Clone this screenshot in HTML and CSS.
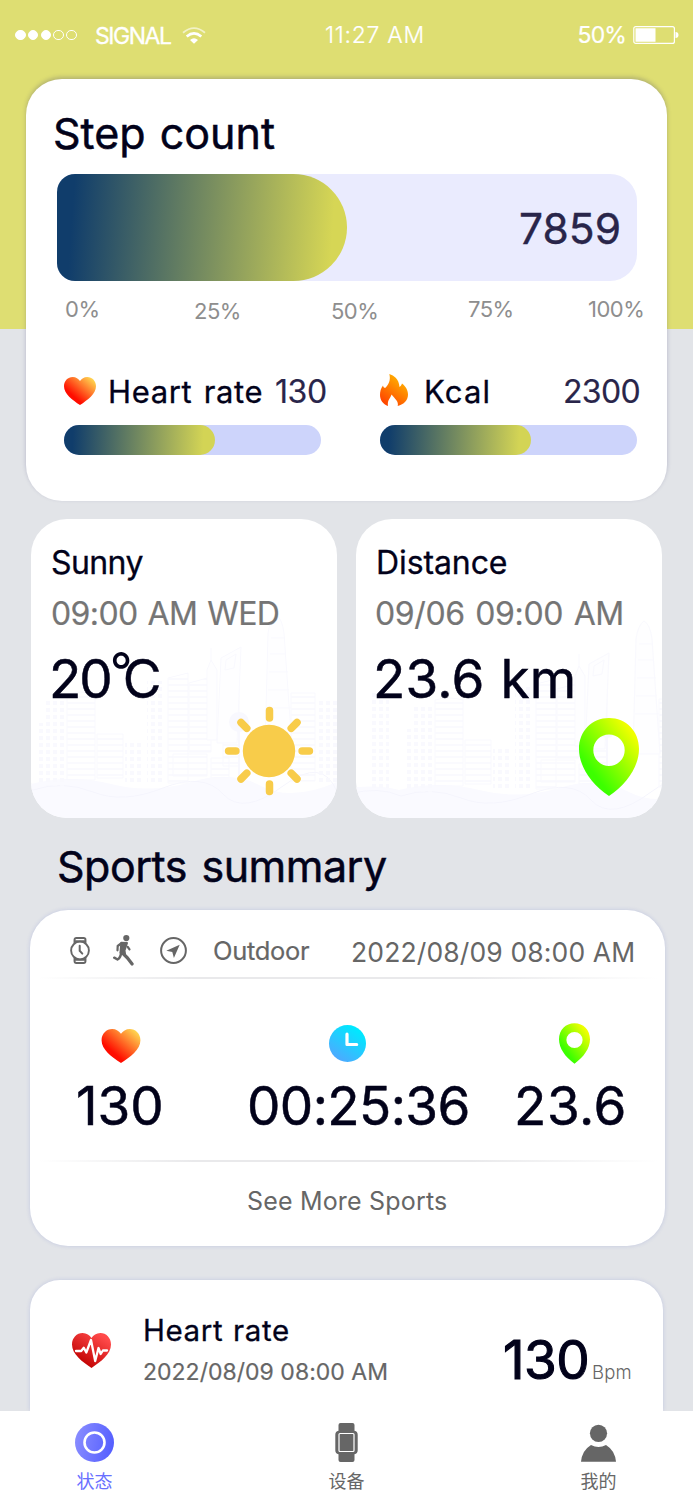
FILE: index.html
```
<!DOCTYPE html>
<html lang="en">
<head>
<meta charset="utf-8">
<title>Health status</title>
<link rel="stylesheet" href="styles.css">
</head>
<body>
<svg class="defs" aria-hidden="true">
  <defs>
    <linearGradient id="gHeart" x1=".2" y1=".8" x2=".9" y2=".1"><stop offset=".15" stop-color="#ff0d00"/><stop offset="1" stop-color="#ffd24f"/></linearGradient>
    <linearGradient id="gFlame" x1=".2" y1=".9" x2=".7" y2=".1"><stop offset="0" stop-color="#ff4800"/><stop offset="1" stop-color="#ffb000"/></linearGradient>
    <linearGradient id="gPin" x1=".2" y1=".8" x2=".85" y2=".15"><stop offset=".1" stop-color="#3cff00"/><stop offset="1" stop-color="#f0ff00"/></linearGradient>
    <linearGradient id="gClock" x1=".15" y1=".9" x2=".7" y2=".1"><stop offset="0" stop-color="#4fa8ff"/><stop offset="1" stop-color="#00e8ff"/></linearGradient>
    <linearGradient id="gPulse" x1=".2" y1=".9" x2=".8" y2=".1"><stop offset=".1" stop-color="#c40606"/><stop offset="1" stop-color="#ff4a4a"/></linearGradient>
    <linearGradient id="gNav" x1="0" y1=".4" x2="1" y2=".6"><stop offset="0" stop-color="#888cff"/><stop offset="1" stop-color="#545eff"/></linearGradient>
    <pattern id="floors" width="8" height="6" patternUnits="userSpaceOnUse"><path d="M0 1h8" stroke="#f8f8fe" stroke-width="1.4"/></pattern>
    <pattern id="panes" width="7" height="7" patternUnits="userSpaceOnUse"><path d="M1 1h4v4H1z" fill="#f9f9fe"/></pattern>
    <symbol id="heart" viewBox="0 0 32 28"><path d="M8.7 0C4 0 0 3.8 0 9.2 0 17 8.500 23 16 28c7.500-5 16-11 16-18.800C32 3.800 28 0 23.300 0 20 0 17.500 1.700 16 4 14.500 1.700 12 0 8.700 0z"/></symbol>
    <symbol id="pin" viewBox="0 0 60 78"><path fill-rule="evenodd" d="M30 0C13 0 0 13 0 31c0 17 12 35 30 47 18-12 30-30 30-47C60 13 47 0 30 0zm0 16.500a15.700 15.700 0 1 1 0 31.400 15.700 15.700 0 0 1 0-31.400z"/></symbol>
    <g id="skyline">
      <path d="M-50 194q30-4 50 2 40-10 80 0t80-2 70 4 76-4v46H-50z" fill="#fafaff"/>
      <path d="M-50 200q30-8 52 2 30-10 60 2t70-4 60 6 60-8 54 6" fill="none" stroke="#f5f5fd"/>
      <g stroke="#f9f9fe" fill="url(#floors)">
        <path d="M36 106q14-4 28 0v86H36zM137 90l20-5v110h-20zM158 95l22-6v75h-22zM192 74l16-8v112h-16zM66 146h26v44H66zM142 166h34v22h-34zM180 170h18v20h-18zM260 105h24v88h-24z"/>
      </g>
      <path d="M190 70l20-11-4 96h-20zM195 72l10-6-2 14-9 2zM180 74v-14m-4 22l4-10 6 10v70h-10zM234 160l3-115q2-14 8-18 6 3 8 18l8 115zM240 50h14M239 66h16M238 84h19M237 102h21M236 120h24" fill="#fefeff" stroke="#f9f9fe"/>
      <path d="M-30 98h20v98h-20zM14 113h20v85H14zM5 135h9v62H5zM116 93h17v103h-17zM286 110h20v84h-20zM94 155h18v40H94z" fill="url(#panes)"/>
      <circle cx="208" cy="134" r="10" fill="#f8f8fe"/><path d="M207 143h2v50h-2z" fill="#f8f8fe"/>
    </g>
  </defs>
</svg>

<main class="screen">
  <header class="status">
    <span class="dots"><i class="dot on"></i><i class="dot on"></i><i class="dot on"></i><i class="dot"></i><i class="dot"></i></span>
    <span class="carrier">SIGNAL</span>
    <svg class="wifi" viewBox="0 0 24 17"><path d="M1 5.700Q12-3.500 23 5.700" fill="none" stroke="#fff" stroke-width="1.800" opacity=".6"/><path d="M4.700 9.400q7.300-6.200 14.600 0" fill="none" stroke="#fff" stroke-width="2.600"/><path d="M8 13q4-3.400 8 0l-4 3.700z" fill="#fff"/></svg>
    <span class="clock">11:27 AM</span>
    <span class="battery-label">50%</span>
    <svg class="battery" viewBox="0 0 46 18"><rect x=".8" y=".6" width="40.600" height="16.800" rx="2" fill="none" stroke="#fff" stroke-width="1.200"/><path d="M2.500 2.300h20v13.400h-20zM42.500 6q3 0 3 3t-3 3z" fill="#fff"/></svg>
  </header>

  <section class="card steps">
    <h1 class="steps-title">Step count</h1>
    <div class="steps-track"><div class="steps-fill"></div><span class="steps-value">7859</span></div>
    <div class="scale"><span>0%</span><span class="low">25%</span><span class="low">50%</span><span>75%</span><span>100%</span></div>
    <div class="metrics">
      <div class="metric">
        <div class="metric-head"><svg class="metric-heart" fill="url(#gHeart)"><use href="#heart"/></svg><span class="metric-name">Heart rate</span><span class="metric-value">130</span></div>
        <div class="track"><div class="fill"></div></div>
      </div>
      <div class="metric">
        <div class="metric-head"><svg class="flame" viewBox="0 0 28 32"><path fill="url(#gFlame)" d="M9.300 0C14 1.500 19 5 19.500 13c1.300-1 2-2 2.500-3.500 3.500 2.500 6 6.500 6 11C28 26 24 30.500 17.700 32 19 27.500 15 25 11.500 20.500 11 23.500 7 26 8 32 3 30 0 26 0 21c0-3.500.8-6.500 3-9.500.3 1.500 1 2.500 2.500 2.300C10 9 10.500 4.500 9.300 0z"/></svg><span class="metric-name n-kcal">Kcal</span><span class="metric-value v-kcal">2300</span></div>
        <div class="track"><div class="fill"></div></div>
      </div>
    </div>
  </section>

  <div class="tiles">
    <section class="tile">
      <svg class="skyline"><use href="#skyline"/></svg>
      <h2 class="tile-title t-sunny">Sunny</h2>
      <p class="tile-date">09:00 AM WED</p>
      <p class="tile-value v-temp">20<span class="degree">°</span><span>C</span></p>
      <svg class="sun" viewBox="-45 -45 90 90"><circle r="26.200" fill="#f8cc4a"/><path d="M.5-40.400v7.300M.5 40.400v-7.300M-40.400 0h7.300M40.400 0h-7.300M-28-28.500l5.800 5.800M28-28.500l-5.800 5.800M-28 28l5.800-5.800M28 28l-5.800-5.800" stroke="#f8cc4a" stroke-width="7.500" stroke-linecap="round"/></svg>
    </section>
    <section class="tile">
      <svg class="skyline shifted"><use href="#skyline"/></svg>
      <h2 class="tile-title">Distance</h2>
      <p class="tile-date d-distance">09/06 09:00 AM</p>
      <p class="tile-value v-distance">23.6 km</p>
      <svg class="pin-large" fill="url(#gPin)"><use href="#pin"/></svg>
    </section>
  </div>

  <h2 class="section-title">Sports summary</h2>

  <section class="card sports">
    <div class="sports-head">
      <svg class="ico-watch" viewBox="0 0 20 27" fill="none" stroke="#666" stroke-width="1.900"><circle cx="10" cy="13.500" r="8.900"/><path d="M4.500 6.300V2.900Q4.500 1 6.400 1h7.200q1.900 0 1.900 1.900v3.400M4.500 20.700v3.400Q4.500 26 6.400 26h7.200q1.900 0 1.900-1.900v-3.400M5 4.300h10M5 22.700h10"/><path d="M9.700 8.800v5l2.600 2.800" stroke-linecap="round" stroke-width="2"/></svg>
      <svg class="ico-run" viewBox="0 0 21 31" fill="none" stroke="#666" stroke-linecap="round" stroke-linejoin="round"><circle cx="13.300" cy="3.100" r="3.100" fill="#666" stroke="none"/><path d="M8.300 7.800l5.700.2-2.500 7.500.5 3.500-4.500-1.500z" fill="#666" stroke-width="2"/><path d="M8 8.500L4.700 11l-.2 4.300M14.800 12l1.700 2.300" stroke-width="2.200"/><path d="M8 17.500q0 5-3.500 7L1.300 22.700" stroke-width="2.500"/><path d="M9.500 18l5 5 4.600 6" stroke-width="3.200"/></svg>
      <svg class="ico-nav" viewBox="0 0 27 27"><circle cx="13.500" cy="13.500" r="12.400" fill="none" stroke="#666" stroke-width="2"/><path d="M19.700 7.800L6.300 13.700l6 1.400 1.600 6z" fill="#666"/></svg>
      <span class="mode">Outdoor</span>
      <time class="sports-date">2022/08/09 08:00 AM</time>
    </div>
    <div class="divider"></div>
    <div class="stats">
      <div class="stat s-heart"><svg class="stat-heart" fill="url(#gHeart)"><use href="#heart"/></svg><strong>130</strong></div>
      <div class="stat s-time"><svg class="stat-clock" viewBox="0 0 37 37"><circle cx="18.500" cy="18.500" r="18.500" fill="url(#gClock)"/><path d="M18 9.200v10.300h9.700" fill="none" stroke="#fff" stroke-width="3.200" stroke-linecap="round" stroke-linejoin="round"/></svg><strong>00:25:36</strong></div>
      <div class="stat s-distance"><svg class="stat-pin" fill="url(#gPin)"><use href="#pin"/></svg><strong>23.6</strong></div>
    </div>
    <div class="divider"></div>
    <a class="more">See More Sports</a>
  </section>

  <section class="card heart-card">
    <svg class="pulse" viewBox="0 0 39 35"><svg width="39" height="35" viewBox="0 0 32 28" preserveAspectRatio="none" fill="url(#gPulse)"><use href="#heart" width="32" height="28"/></svg><path d="M4 18h5.200l2.600-3.200 2.500 4.700L19 7l4.200 21 3.300-13 2.200 6 2.200-3.500H35" fill="none" stroke="#fff" stroke-width="2.300" stroke-linejoin="round" stroke-linecap="round"/></svg>
    <div class="heart-info"><h3>Heart rate</h3><time>2022/08/09 08:00 AM</time></div>
    <strong class="heart-value">130</strong><span class="bpm">Bpm</span>
  </section>

  <nav class="tabs">
    <a class="tab active"><svg width="39" height="39" viewBox="0 0 39 39"><circle cx="19.500" cy="19.500" r="19.500" fill="url(#gNav)"/><circle cx="19.500" cy="19.500" r="10" fill="none" stroke="#fff" stroke-width="2.600"/></svg>状态</a>
    <a class="tab"><svg width="23" height="39" viewBox="0 0 23 39"><path fill="#666" d="M5.500 0h12q2 0 2 2v5.800q3.200.7 3.200 4v15.400q0 3.300-3.200 4V37q0 2-2 2h-12q-2 0-2-2v-5.800q-3.200-.7-3.200-4V11.800q0-3.300 3.200-4V2q0-2 2-2z"/><rect x="4" y="10.500" width="15" height="18" rx="1" fill="none" stroke="#fff" stroke-width="1.200"/></svg>设备</a>
    <a class="tab"><svg width="35" height="39" viewBox="0 0 35 39"><circle cx="17.500" cy="10.300" r="8.600" fill="#666"/><path d="M0 38.800Q1 27.500 10 22q7.500 4 15 0 9 5.500 10 16.800z" fill="#666"/></svg>我的</a>
  </nav>
</main>
</body>
</html>
```
FILE: styles.css
```
* { box-sizing: border-box; margin: 0; padding: 0; }
body { width: 693px; height: 1500px; overflow: hidden; background: #e2e4e8; }
svg { display: block; flex: none; }
.defs { position: absolute; width: 0; height: 0; }
h1, h2, h3, strong { font-weight: 400; }

.screen {
  display: flex; flex-direction: column; width: 693px; height: 1500px; overflow: hidden;
  font-family: Inter, "Noto Sans CJK SC", sans-serif; color: #02021a; white-space: nowrap;
  background: linear-gradient(#dede72 329px, #e2e4e8 329px);
}

.status { display: flex; align-items: center; height: 79px; padding: 0 15px 9px; font-size: 23px; color: #fff; }
.dots { display: flex; gap: 2.3px; width: 80px; }
.dot { width: 10.500px; height: 10.500px; border: 1px solid #fff; border-radius: 50%; }
.dot.on { background: #fff; }
.carrier { width: 87px; padding-top: 2px; letter-spacing: -1.46px; -webkit-text-stroke: .3px #fff; }
.wifi { width: 24px; height: 17px; }
.clock { width: 253px; padding-left: 119px; letter-spacing: .7px; font-weight: 300; -webkit-text-stroke: .2px #fff; }
.battery-label { flex: 1; letter-spacing: -.9px; text-align: right; -webkit-text-stroke: .2px #fff; }
.battery { width: 46px; height: 18px; margin: 0 -1px 0 7px; }

.card { background: #fff; box-shadow: 0 0 4px rgba(70, 90, 200, .2); }

.steps { flex: none; width: 641px; height: 422px; margin-left: 26px; padding-top: 27px; border-radius: 36px; box-shadow: 0 -2px 4px rgba(50, 50, 110, .26); }
.steps-title { height: 54px; margin-left: 27px; font-size: 43px; line-height: 54px; letter-spacing: 0; word-spacing: 2px; -webkit-text-stroke: .5px; }
.steps-track { display: flex; justify-content: space-between; align-items: center; width: 580px; height: 107px; margin: 14px 0 0 31px; border-radius: 18px 27px 27px 18px; background: #eaebfe; }
.steps-fill { width: 290px; height: 107px; border-radius: 18px 53.500px 53.500px 18px; background: linear-gradient(94deg, #103d6b 6%, #d6d655 94%); }
.steps-value { margin-right: 16px; padding-top: 2px; font-size: 42.500px; letter-spacing: 0; color: #29254a; -webkit-text-stroke: .4px; }
.scale { display: grid; grid-template-columns: 129px 137px 137px 120px auto; height: 28px; margin: 14px 0 0 39px; font-size: 22px; line-height: 28px; letter-spacing: -.5px; color: #8e8e8e; }
.scale .low { padding-top: 2px; }
.metrics { display: grid; grid-template-columns: 257px 260px; gap: 59px; margin: 47px 0 0 38px; }
.metric-head { display: flex; align-items: center; height: 42px; }
.metric-heart { width: 32px; height: 28px; }
.metric-name { flex: none; width: 166px; margin-left: 12px; font-size: 31px; letter-spacing: .65px; word-spacing: 2px; -webkit-text-stroke: .3px; }
.n-kcal { width: 137px; margin-left: 16px; letter-spacing: 1.2px; }
.metric-value { padding-left: 1px; font-size: 32px; letter-spacing: -.4px; color: #29254a; -webkit-text-stroke: .2px; }
.v-kcal { padding-left: 2px; letter-spacing: -.66px; }
.flame { width: 28px; height: 32px; margin-top: -2px; }
.track { width: 257px; height: 30px; margin-top: 13px; border-radius: 15px; background: #cdd4fb; }
.fill { width: 151px; height: 30px; border-radius: 15px; background: linear-gradient(92deg, #103d6b 6%, #d3d455 92%); }

.tiles { display: grid; grid-template-columns: 306px 306px; gap: 19px; margin: 18px 0 0 31px; }
.tile { position: relative; height: 299px; padding: 24px 0 0 20px; border-radius: 36px; background: #fff; overflow: hidden; }
.skyline { position: absolute; left: 0; bottom: 0; width: 306px; height: 230px; overflow: visible; }
.skyline.shifted { left: 43px; bottom: -6px; }
.tile > :not(.skyline) { position: relative; }
.tile-title { height: 40px; font-size: 32px; line-height: 40px; letter-spacing: -.1px; -webkit-text-stroke: .3px; }
.t-sunny { letter-spacing: -.6px; }
.tile-date { height: 40px; margin-top: 11px; font-size: 32px; line-height: 40px; letter-spacing: -.6px; word-spacing: 1.500px; color: #757575; -webkit-text-stroke: .2px; }
.d-distance { margin-left: -1px; letter-spacing: -.38px; word-spacing: 2px; }
.tile-value { display: flex; height: 60px; margin: 15px 0 0 -3px; font-size: 53px; line-height: 60px; -webkit-text-stroke: .5px; }
.v-temp { margin-left: -2px; letter-spacing: -2px; }
.v-distance { letter-spacing: .2px; word-spacing: 1px; }
.degree { width: 13px; margin: -8px 0 0 -1px; font-size: 50px; -webkit-text-stroke: 0; }
.sun { width: 90px; height: 90px; margin: -3px 0 0 173px; }
.pin-large { width: 60px; height: 78px; margin: 9px 0 0 203px; }

.section-title { height: 54px; margin: 21px 0 0 57px; font-size: 43px; line-height: 54px; letter-spacing: -.5px; word-spacing: 3px; -webkit-text-stroke: .5px; }

.sports { flex: none; width: 635px; height: 336px; margin: 17px 0 0 30px; border-radius: 38px; }
.sports-head { display: flex; align-items: center; height: 67px; padding: 14px 0 0 40px; color: #666; }
.ico-watch { width: 20px; height: 27px; }
.ico-run { width: 21px; height: 31px; margin-left: 23px; }
.ico-nav { width: 27px; height: 27px; margin-left: 26px; }
.mode { width: 139px; margin-left: 26px; font-size: 25.500px; letter-spacing: -.3px; -webkit-text-stroke: .2px; }
.sports-date { margin-left: -1px; padding-top: 2px; font-size: 26.500px; letter-spacing: .13px; }
.divider { height: 2px; margin: 0 8px; background: linear-gradient(90deg, #fff, #e9e9eb 25%, #e9e9eb 70%, #fff); }
.stats { display: flex; height: 181px; }
.stat { display: flex; flex-direction: column; }
.stat strong { height: 60px; margin-top: -1px; font-size: 53px; line-height: 58px; -webkit-text-stroke: .5px; }
.s-heart { width: 171px; padding-left: 46px; letter-spacing: 0; }
.s-time { width: 267px; padding-left: 46px; letter-spacing: -.6px; }
.s-distance { padding-left: 46px; letter-spacing: .6px; }
.stat-heart { width: 40px; height: 34px; margin: 50px 0 15px 25px; }
.stat-clock { width: 37px; height: 37px; margin: 46px 0 16px 82px; }
.stat-pin { width: 31px; height: 41px; margin: 44px 0 14px 45px; }
.more { display: block; height: 78px; padding-left: 217px; font-size: 25px; line-height: 79px; letter-spacing: .18px; color: #666; }

.heart-card { display: flex; flex: none; width: 633px; height: 131px; margin: 34px 0 0 30px; padding-left: 42px; border-radius: 30px 30px 0 0; }
.pulse { width: 39px; height: 35px; margin-top: 53px; }
.heart-info { flex: none; width: 392px; padding: 30px 0 0 32px; }
.heart-info h3 { height: 40px; font-size: 29.500px; line-height: 40px; letter-spacing: .6px; word-spacing: 1px; -webkit-text-stroke: .3px; }
.heart-info time { display: block; height: 30px; margin-top: 7px; font-size: 23px; line-height: 30px; letter-spacing: .02px; color: #666; -webkit-text-stroke: .2px; }
.heart-value { flex: none; width: 89px; padding-top: 50px; font-size: 53px; line-height: 60px; letter-spacing: -.5px; -webkit-text-stroke: 1.100px; }
.bpm { padding-top: 82px; font-size: 18.500px; line-height: 20px; font-weight: 300; letter-spacing: .2px; color: #666; }

.tabs { display: grid; grid-template-columns: 189px 315px 189px; flex: none; height: 89px; background: #fff; position: relative; }
.tab { display: flex; flex-direction: column; align-items: center; padding-top: 12px; font-family: "Noto Sans CJK SC", sans-serif; font-size: 18px; line-height: 20px; color: #666; }
.tab svg { margin-bottom: 8px; }
.tab.active { color: #6970ff; }
```
